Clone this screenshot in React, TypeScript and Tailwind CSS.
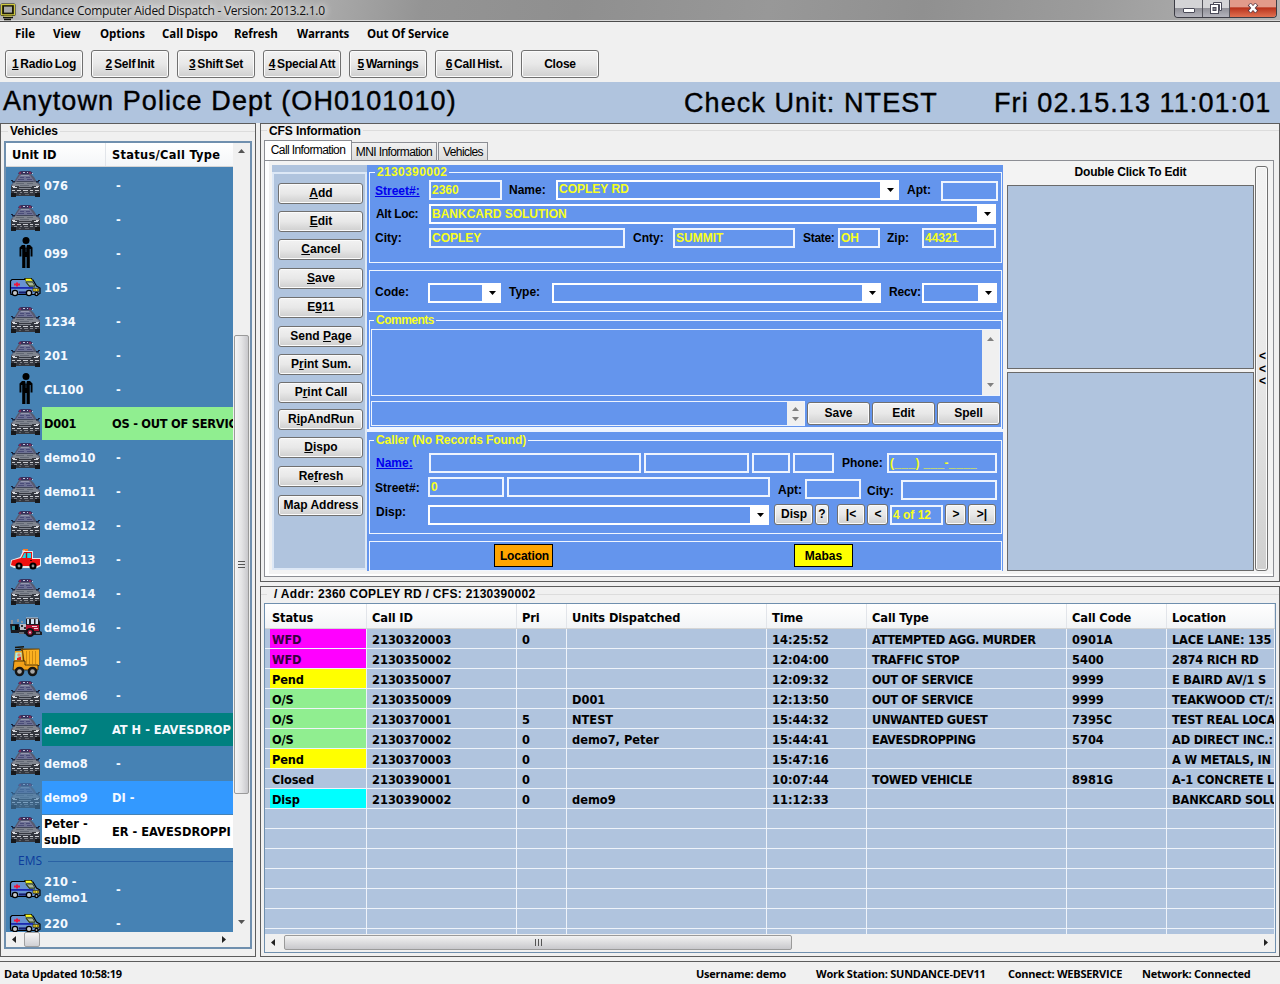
import React from "react";

const FACE = "font-['Liberation_Sans',sans-serif] font-bold whitespace-pre";
const UI = `${FACE} text-[12px] leading-[14px]`;
const LIST = "font-['DejaVu_Sans_Condensed','DejaVu_Sans',sans-serif] font-bold [font-stretch:condensed] text-[12.7px] whitespace-pre";
const SEGOE = "font-['Open_Sans',sans-serif] font-bold leading-[16px] whitespace-pre";
const BTN =
  "flex items-center justify-center shrink-0 rounded-[3px] border border-[#707070] shadow-[inset_0_0_0_1px_#fbfbfb] bg-linear-to-b from-[#f2f2f2] from-0% via-[#e8e8e8] via-50% to-[#cfcfcf] text-black";
const FIELD = "shrink-0 border-2 border-[#eef4fe] bg-[#6495ed] pl-px text-[#f8ff20] flex items-center overflow-hidden";

/* ---------- small glyphs ---------- */

function Tri({ dir, color = "#222" }: { dir: "up" | "down" | "left" | "right"; color?: string }) {
  const d = {
    up: "M0 5 L3.5 1 L7 5Z",
    down: "M0 1 L7 1 L3.5 5Z",
    left: "M5 0 L1 3.5 L5 7Z",
    right: "M1 0 L5 3.5 L1 7Z",
  }[dir];
  return (
    <svg width="7" height="7" viewBox="0 0 7 7" className="block shrink-0">
      <path d={d} fill={color} />
    </svg>
  );
}

function PoliceCar({ faded = false }: { faded?: boolean }) {
  return (
    <svg width="31" height="26" viewBox="0 0 31 26" className={faded ? "-mt-[3px] opacity-40" : "-mt-[3px]"}>
      <path d="M9 1 L11 0 H20 L22 1 L23 3 L8 3Z" fill="#37305c" />
      <path d="M9 1h2v2h-2zM19 1h2v2h-2z" fill="#7c2c58" />
      <path d="M13 1h2v1h-2zM17 1h1v1h-1zM22 2h1v1h-1z" fill="#c4c8dc" />
      <path d="M9 3 H21 L24 6 L27 11 L30 13 V25 H1 V14 L4 11 L7 6Z" fill="#565a70" />
      <path d="M10 4 H20 L24 10 H6Z" fill="#6e7294" />
      <path d="M11 4h8v1h-8z" fill="#9498b0" />
      <path d="M10 6h4v1h-4zM16 6h4v1h-4zM8 8h6v1h-6zM17 8h5v1h-5z" fill="#4a4c78" />
      <path d="M4 11 H26 L30 15 H2Z" fill="#80858f" />
      <path d="M7 10h16v1h-16z" fill="#41465a" />
      <path d="M6 12h8v1h-8zM17 12h6v1h-6zM10 14h9v1h-9z" fill="#626874" />
      <path d="M1 9h2v1h-2zM2 10h3v1.5h-3zM28 9h2v1h-2zM26 10h3v1.5h-3z" fill="#18233c" />
      <path d="M1 15h29v10h-29z" fill="#34373f" />
      <path d="M2 15h3v1h-3zM3 16h4v1h-4zM24 16h4v1h-4zM26 15h3v1h-3z" fill="#d7d9de" />
      <path d="M9 15h13v1h-13zM9 17h12v1h-12z" fill="#81858e" />
      <path d="M2 19h3v1h-3zM7 19h4v1h-4zM13 19h5v1h-5zM20 19h3v1h-3zM25 19h4v1h-4z" fill="#c9cbd0" />
      <path d="M4 21h3v1h-3zM10 21h2v1h-2zM14 21h4v1h-4zM20 21h3v1h-3zM25 21h2v1h-2z" fill="#85888f" />
      <path d="M1 22h5v4h-5zM25 22h5v4h-5z" fill="#17181b" />
      <path d="M9 23h2v1h-2zM15 23h4v1h-4z" fill="#5e6066" />
    </svg>
  );
}

function Person() {
  return (
    <svg width="14" height="32" viewBox="0 0 14 32">
      <circle cx="7" cy="3.6" r="3.5" fill="#000" />
      <path d="M3 8 H11 L13.5 10.5 V19.5 H11.6 V12 H10.8 V31 H7.6 V20 H6.4 V31 H3.2 V12 H2.4 V19.5 H0.5 V10.5Z" fill="#000" />
      <path d="M6 8h2l-1 4z" fill="#4682b4" />
      <path d="M7 12v3" stroke="#27567c" strokeWidth="0.6" />
    </svg>
  );
}

function Ambulance() {
  return (
    <svg width="32" height="20" viewBox="0 0 32 20" className="-ml-px -mt-px">
      <path d="M1.5 15.5 V4 L3 2.5 H16 V1.5 H22.5 V3 H24 L27.5 9 L31 11 V16.5 L29 17.5 H2Z" fill="#6892d0" stroke="#000" strokeWidth="1.2" />
      <path d="M16.5 1.5 H22 L24 4.2 H16.5Z" fill="#ffff20" stroke="#3a3a00" strokeWidth="0.5" />
      <path d="M17 5 H23.5 L26 9 H20Z" fill="#a4b49c" stroke="#26300c" strokeWidth="0.8" />
      <path d="M17 5 L21 10 H26" stroke="#3a4c18" strokeWidth="1.2" fill="none" />
      <path d="M5 6.5h6v2h-6zM7 5.5h2v4h-2z" fill="#f0143c" />
      <path d="M2 10h22v1.8h-22z" fill="#1a28b0" />
      <path d="M10 14.4h7v2.2h-7z" fill="#141c70" />
      <path d="M24 11.4h6v3h-6z" fill="#f0e030" stroke="#000" strokeWidth="0.6" />
      <path d="M25.5 12.4h1.2v1.2h-1.2zM28 12.4h1.2v1.2h-1.2z" fill="#402000" />
      <circle cx="6" cy="16" r="3.3" fill="#000" />
      <circle cx="6" cy="16" r="2" fill="#c4c8cc" />
      <circle cx="20" cy="16" r="3.3" fill="#000" />
      <circle cx="20" cy="16" r="2" fill="#c4c8cc" />
      <circle cx="27.5" cy="17" r="2.2" fill="#000" />
      <circle cx="27.5" cy="17" r="0.9" fill="#b0b0b0" />
    </svg>
  );
}

function RedCar() {
  return (
    <svg width="31" height="22" viewBox="0 0 31 22">
      <path d="M0 18 L1 12 L10 9 L13 3 H23 V10 H31 V18 L27 20 H4Z" fill="#e8e8e8" />
      <path d="M1 17 L2 12.5 L11 10 L14 4 H22 V11 H30 V17 L27 18 H4Z" fill="#ee1010" />
      <path d="M12 10 L14.5 5 H21 V10Z" fill="#18d8e8" />
      <path d="M16.5 4 V10" stroke="#b01010" strokeWidth="1.4" />
      <path d="M13 1h5v2h-5z" fill="#ff7a20" />
      <path d="M12 2.5h3v1h-3z" fill="#f0f0f0" />
      <path d="M20 12h2v1h-2z" fill="#400" />
      <circle cx="9" cy="18" r="3.6" fill="#000" />
      <circle cx="9" cy="18" r="1.4" fill="#909090" />
      <circle cx="23" cy="18" r="3.6" fill="#000" />
      <circle cx="23" cy="18" r="1.4" fill="#909090" />
    </svg>
  );
}

function FireTruck() {
  return (
    <svg width="32" height="22" viewBox="0 0 32 22">
      <path d="M0 8h9v3h7V2h12l2 4v9l2 1v3H18l-6-2H1Z" fill="#1a1a20" />
      <path d="M16 1.5h12v1h-12z" fill="#c8c8d0" />
      <path d="M17 3h2v5h-2zM21 3h3v5h-3zM25.5 3h2.5v5h-2.5z" fill="#cfe0f0" />
      <path d="M16 9h13v6h-13z" fill="#b01230" />
      <path d="M22 10h5v1h-5zM24 12h4v1h-4z" fill="#f0d0d8" />
      <path d="M10 8h6v6h-6z" fill="#b8bcc6" />
      <path d="M11 9h2v2h-2zM14 11h2v2h-2z" fill="#333" />
      <path d="M2 10h3v4h-3z" fill="#2c8a98" />
      <path d="M1 4h2v4h-2zM7 3h2v3h-2zM11 5h2v2h-2z" fill="#8a929c" />
      <path d="M5 9h3v5h-3z" fill="#000" />
      <circle cx="20" cy="16.5" r="4.5" fill="#101014" />
      <circle cx="20" cy="16.5" r="2.4" fill="#a01a3c" />
      <circle cx="20" cy="16.5" r="1" fill="#d8d8e0" />
      <path d="M9 16h5v2h-5zM26 16h4v2h-4z" fill="#686c74" />
    </svg>
  );
}

function DumpTruck() {
  return (
    <svg width="28" height="31" viewBox="0 0 28 31">
      <path d="M3 1.5 L12 0.8 M3 4 L11 3" stroke="#1a1408" strokeWidth="1.6" />
      <path d="M9 2.5 H27.5 V20 H12 L9 14Z" fill="#6a4408" />
      <path d="M11 4 L27 3.5 V19 H13Z" fill="#fcb020" />
      <path d="M14.5 5v13M17.5 5v13M20.5 5v13M23.5 5v13" stroke="#c88410" strokeWidth="0.9" />
      <path d="M3 5 L10 5 L11 15 H2Z" fill="#f0a018" />
      <path d="M3.5 6.5 H9.5 V14 H3Z" fill="#a8f0e8" />
      <circle cx="7" cy="9" r="1.8" fill="#e89070" />
      <path d="M5 12 L9 10.5 V14 H5Z" fill="#e02020" />
      <path d="M2 15 H13 V19 H26 V24 H1Z" fill="#f0a018" stroke="#2a1c04" strokeWidth="0.8" />
      <circle cx="7.5" cy="25.5" r="4.8" fill="#151515" />
      <circle cx="7.5" cy="25.5" r="2.3" fill="#a8a8a8" />
      <circle cx="20.5" cy="25.5" r="4.8" fill="#151515" />
      <circle cx="20.5" cy="25.5" r="2.3" fill="#a8a8a8" />
    </svg>
  );
}

type Kind = "police" | "faded" | "person" | "ambulance" | "red" | "fire" | "dump";

function Icon({ kind }: { kind: Kind }) {
  if (kind === "person") return <Person />;
  if (kind === "ambulance") return <Ambulance />;
  if (kind === "red") return <RedCar />;
  if (kind === "fire") return <FireTruck />;
  if (kind === "dump") return <DumpTruck />;
  return <PoliceCar faded={kind === "faded"} />;
}

/* ---------- window chrome ---------- */

function TitleBar() {
  return (
    <header className="flex h-[22px] justify-between border-b border-[#4c4c4c] bg-[linear-gradient(100deg,#b4b4b4_0%,#bdbdbd_18%,#a8a8a8_26%,#949494_33%,#8f8f8f_45%,#989898_60%,#909090_72%,#9c9c9c_85%,#a8a8a8_93%,#b4b4b4_100%)] shadow-[inset_0_-1px_0_#d8d8d8]">
      <div className="flex items-start">
        <svg width="17" height="20" viewBox="0 0 17 20" className="mt-[2px]">
          <rect x="0.5" y="1.5" width="15" height="12.5" rx="1.5" fill="#1c1c08" />
          <rect x="1.6" y="2.6" width="12.8" height="10.2" fill="none" stroke="#d8d040" strokeWidth="1.1" />
          <rect x="4" y="4.6" width="8" height="6" fill="#a9a9a9" />
          <path d="M3 15.5h10M4 17.5h7" stroke="#14140a" strokeWidth="1.5" />
          <path d="M4 14.2h8" stroke="#d8d040" strokeWidth="0.8" />
        </svg>
        <span className="ml-[4px] mt-[2px] whitespace-pre font-['Open_Sans',sans-serif] text-[12px] leading-[17px] tracking-[-0.26px] text-[#111] [text-shadow:0_0_6px_#fff,0_0_8px_#fff]">
          Sundance Computer Aided Dispatch - Version: 2013.2.1.0
        </span>
      </div>
      <div className="mr-[3px] flex h-[18px] w-[103px] overflow-hidden rounded-b-[4px] border border-t-0 border-[#3c3c44]">
        <div className="flex w-[28px] items-center justify-center border-r border-[#55555c] bg-linear-to-b from-[#d4d4d6] from-45% via-[#8f8f96] via-46% to-[#b4b4bc]">
          <div className="mt-[3px] h-[5px] w-[12px] rounded-[1px] border border-[#4a4a58] bg-white" />
        </div>
        <div className="flex w-[27px] items-center justify-center border-r border-[#55555c] bg-linear-to-b from-[#d4d4d6] from-45% via-[#8f8f96] via-46% to-[#b4b4bc]">
          <svg width="12" height="12" viewBox="0 0 12 12" className="-mt-[1px]">
            <path d="M3.5 0.5h8v8h-2v-6h-6z" fill="#fff" stroke="#4a4a58" />
            <rect x="0.5" y="2.5" width="8" height="9" fill="#fff" stroke="#4a4a58" />
            <rect x="3" y="5.5" width="3" height="3" fill="#8a8a92" stroke="#4a4a58" />
          </svg>
        </div>
        <div className="flex flex-1 items-center justify-center bg-linear-to-b from-[#e29a8a] from-40% via-[#b8301a] via-46% to-[#e07050]">
          <svg width="12" height="10" viewBox="0 0 12 10" className="-mt-[1px]">
            <path d="M2.2 1 L9.8 9 M9.8 1 L2.2 9" stroke="#5a3a44" strokeWidth="4" />
            <path d="M2.8 1.4 L9.2 8.6 M9.2 1.4 L2.8 8.6" stroke="#fff" strokeWidth="2.4" />
          </svg>
        </div>
      </div>
    </header>
  );
}

function Menu() {
  return (
    <nav className={`${SEGOE} flex h-[28px] items-start pt-[4px] text-[11.5px] tracking-[-0.05px]`}>
      <span className="ml-[15px] w-[38px]">File</span>
      <span className="w-[47px]">View</span>
      <span className="w-[62px]">Options</span>
      <span className="w-[72px]">Call Dispo</span>
      <span className="w-[63px]">Refresh</span>
      <span className="w-[70px] tracking-[-0.2px]">Warrants</span>
      <span>Out Of Service</span>
    </nav>
  );
}

const TOOLS: [string, string][] = [
  ["1", " Radio Log"],
  ["2", " Self Init"],
  ["3", " Shift Set"],
  ["4", " Special Att"],
  ["5", " Warnings"],
  ["6", " Call Hist."],
  ["", "Close"],
];

function Toolbar() {
  return (
    <div className="flex h-[32px] gap-[8px] pl-[5px]">
      {TOOLS.map(([k, t]) => (
        <button key={t} className={`${BTN} ${UI} h-[28px] w-[78px] tracking-[-0.2px] [word-spacing:-1.2px]`}>
          <span>
            <u>{k}</u>
            {t}
          </span>
        </button>
      ))}
    </div>
  );
}

/* ---------- vehicles ---------- */

const VEHICLES: [Kind, string, string, string][] = [
  ["police", "076", "-", ""],
  ["police", "080", "-", ""],
  ["person", "099", "-", ""],
  ["ambulance", "105", "-", ""],
  ["police", "1234", "-", ""],
  ["police", "201", "-", ""],
  ["person", "CL100", "-", ""],
  ["police", "D001", "OS - OUT OF SERVIC", "bg-[#90ee90] text-black tracking-[-0.25px]"],
  ["police", "demo10", "-", ""],
  ["police", "demo11", "-", ""],
  ["police", "demo12", "-", ""],
  ["red", "demo13", "-", ""],
  ["police", "demo14", "-", ""],
  ["fire", "demo16", "-", ""],
  ["dump", "demo5", "-", ""],
  ["police", "demo6", "-", ""],
  ["police", "demo7", "AT H - EAVESDROP", "bg-[#008080]"],
  ["police", "demo8", "-", ""],
  ["faded", "demo9", "DI -", "bg-[#3399ff]"],
  ["police", "Peter -\nsubID", "ER - EAVESDROPPI", "bg-white text-black"],
];

function VehicleRow({ v }: { v: [Kind, string, string, string] }) {
  const [kind, id, status, tone] = v;
  return (
    <div className="flex h-[34px] shrink-0 items-start text-[#f4f9ff]">
      <div className="flex h-[32px] w-[36px] shrink-0 items-center justify-center pl-[3px]">
        <Icon kind={kind} />
      </div>
      <div className={`flex h-[33px] w-[191px] shrink-0 items-center overflow-hidden pl-[2px] leading-[16px] ${tone}`}>
        <span className="w-[68px] shrink-0">{id}</span>
        <span className={status === "-" ? "pl-[4px]" : ""}>{status}</span>
      </div>
    </div>
  );
}

function Vehicles() {
  return (
    <section className="flex h-[834px] w-[256px] shrink-0 flex-col border border-[#5c5c5c] bg-[#f0f0f0]">
      <div className="flex h-[14px] items-center">
        <span className="h-px w-[7px] bg-[#dcdcdc]" />
        <span className={`${UI} px-[2px]`}>Vehicles</span>
        <span className="h-px flex-1 bg-[#dcdcdc]" />
      </div>
      <div className="ml-[3px] mt-[3px] flex h-[808px] w-[248px] flex-col border-2 border-[#6f8fae] bg-[#f0f0f0]">
        <div className="flex h-[789px]">
          <div className={`${LIST} flex w-[227px] flex-col overflow-hidden bg-[#4682b4]`}>
            <div className="flex h-[24px] shrink-0 items-center border-b border-[#d5d5d5] bg-linear-to-b from-white to-[#f4f6f8]">
              <span className="h-full w-[100px] border-r border-[#e2e5ea] pl-[6px] leading-[24px]">Unit ID</span>
              <span className="pl-[6px] tracking-[0.3px]">Status/Call Type</span>
            </div>
            <div className="h-[2px] w-[12px] shrink-0" />
            {VEHICLES.map((v) => (
              <VehicleRow key={v[1]} v={v} />
            ))}
            <div className="flex h-[24px] shrink-0 items-center pl-[12px]">
              <span className="font-['Open_Sans',sans-serif] text-[12px] font-normal text-[#0c3c9c] [font-stretch:normal]">EMS</span>
              <span className="ml-[6px] h-px flex-1 bg-[#2a62a4]" />
            </div>
            <VehicleRow v={["ambulance", "210 -\ndemo1", "-", ""]} />
            <VehicleRow v={["ambulance", "220", "-", ""]} />
          </div>
          <div className="flex w-[17px] flex-col items-center bg-[#f0f0f0] pt-[5px]">
            <Tri dir="up" color="#555" />
            <div className="mt-[180px] flex h-[459px] w-[15px] shrink-0 items-center justify-center rounded-[2px] border border-[#9a9a9a] bg-linear-to-r from-[#f6f6f6] via-[#e4e4e6] to-[#c8c8cc]">
              <div className="flex flex-col gap-[2px]">
                <span className="h-px w-[7px] bg-[#555]" />
                <span className="h-px w-[7px] bg-[#555]" />
                <span className="h-px w-[7px] bg-[#555]" />
              </div>
            </div>
            <div className="mt-[125px]">
              <Tri dir="down" color="#555" />
            </div>
          </div>
        </div>
        <div className="flex h-[15px] items-center">
          <span className="ml-[5px]">
            <Tri dir="left" />
          </span>
          <span className="ml-[6px] h-[15px] w-[16px] rounded-[2px] border border-[#a0a0a0] bg-linear-to-b from-[#f6f6f6] to-[#d0d0d4]" />
          <span className="ml-[181px]">
            <Tri dir="right" />
          </span>
        </div>
      </div>
    </section>
  );
}

/* ---------- call form ---------- */

function Combo({ className, children }: { className: string; children?: React.ReactNode }) {
  return (
    <div className={`flex h-[20px] shrink-0 bg-white p-[2px] ${className}`}>
      <div className="flex flex-1 items-center overflow-hidden bg-[#6495ed] pl-px text-[#f8ff20]">{children}</div>
      <div className="flex w-[17px] items-center justify-center pl-[3px] pt-px">
        <Tri dir="down" color="#000" />
      </div>
    </div>
  );
}

const ACTIONS: [string, string, string, string][] = [
  ["", "A", "dd", "mt-0"],
  ["", "E", "dit", "mt-[7px]"],
  ["", "C", "ancel", "mt-[7px]"],
  ["", "S", "ave", "mt-[8px]"],
  ["E", "9", "11", "mt-[8px]"],
  ["Send ", "P", "age", "mt-[8px]"],
  ["P", "r", "int Sum.", "mt-[7px]"],
  ["P", "r", "int Call", "mt-[7px]"],
  ["R", "i", "pAndRun", "mt-[6px]"],
  ["", "D", "ispo", "mt-[7px]"],
  ["Re", "f", "resh", "mt-[8px]"],
  ["Map Address", "", "", "mt-[8px]"],
];

function Actions() {
  return (
    <div className="ml-[7px] mt-[4px] h-[405px] w-[95px] shrink-0 bg-[#b0c4de] pt-[7px]">
      <div className="h-[398px] border-2 border-[#dde8f6] pl-[4px] pt-[9px]">
        {ACTIONS.map(([a, u, b, m]) => (
          <button key={a + u + b} className={`${BTN} ${UI} ${m} h-[21px] w-[85px] pb-px pl-px`}>
            <span>
              {a}
              <u>{u}</u>
              {b}
            </span>
          </button>
        ))}
      </div>
    </div>
  );
}

const GROUP = "ml-[2px] w-[633px] border border-[#f0f6ff]";

function Form() {
  return (
    <div className={`${UI} mt-[4px] h-[406px] w-[636px] shrink-0 bg-[#6495ed]`}>
      <fieldset className={`${GROUP} h-[98px]`}>
        <legend className="ml-[5px] px-[2px] leading-[14px] tracking-[0.35px] text-[#f8ff20]">2130390002</legend>
        <div className="flex items-start">
          <span className="ml-[5px] mt-[5px] w-[54px] text-[#0000ee] underline">Street#:</span>
          <div className={`${FIELD} mt-[1px] h-[20px] w-[73px]`}>2360</div>
          <span className="ml-[7px] mt-[4px] w-[47px]">Name:</span>
          <Combo className="mt-[1px] w-[343px]">
            <span className="pb-[2px]">COPLEY RD</span>
          </Combo>
          <span className="ml-[8px] mt-[4px] w-[34px]">Apt:</span>
          <div className={`${FIELD} mt-[2px] h-[20px] w-[57px]`} />
        </div>
        <div className="mt-[3px] flex items-start">
          <span className="ml-[6px] mt-[3px] w-[53px] tracking-[-0.3px]">Alt Loc:</span>
          <Combo className="w-[567px]">BANKCARD SOLUTION</Combo>
        </div>
        <div className="mt-[4px] flex items-center">
          <span className="ml-[5px] w-[54px]">City:</span>
          <div className={`${FIELD} h-[20px] w-[196px]`}>COPLEY</div>
          <span className="ml-[8px] w-[40px]">Cnty:</span>
          <div className={`${FIELD} h-[20px] w-[122px]`}>SUMMIT</div>
          <span className="ml-[8px] w-[35px] tracking-[-0.3px]">State:</span>
          <div className={`${FIELD} h-[20px] w-[42px]`}>OH</div>
          <span className="ml-[7px] w-[35px]">Zip:</span>
          <div className={`${FIELD} h-[20px] w-[74px]`}>44321</div>
        </div>
      </fieldset>
      <div className={`${GROUP} mt-[7px] flex h-[42px] items-center pt-[4px]`}>
        <span className="-mt-[2px] ml-[5px] w-[53px]">Code:</span>
        <Combo className="w-[73px]" />
        <span className="-mt-[2px] ml-[8px] w-[43px]">Type:</span>
        <Combo className="w-[329px]" />
        <span className="-mt-[2px] ml-[8px] w-[33px] tracking-[-0.2px]">Recv:</span>
        <Combo className="w-[75px]" />
      </div>
      <fieldset className={`${GROUP} mt-px h-[116px] border-b-2`}>
        <legend className="ml-[4px] px-[2px] leading-[14px] tracking-[-0.5px] text-[#f8ff20]">Comments</legend>
        <div className="ml-px mt-[2px] flex h-[67px] w-[629px] border border-[#eef4fe]">
          <div className="flex-1" />
          <div className="flex w-[17px] flex-col items-center justify-between bg-[#f0f0f0] py-[6px]">
            <Tri dir="up" color="#808080" />
            <Tri dir="down" color="#808080" />
          </div>
        </div>
        <div className="ml-px mt-[5px] flex h-[25px]">
          <div className="flex w-[434px] border border-[#eef4fe]">
            <div className="flex-1" />
            <div className="flex w-[17px] flex-col items-center justify-between bg-[#f0f0f0] pb-[2px] pt-[4px]">
              <Tri dir="up" color="#808080" />
              <Tri dir="down" color="#808080" />
            </div>
          </div>
          <button className={`${BTN} ${UI} ml-[2px] mt-px h-[23px] w-[63px] pb-px`}>Save</button>
          <button className={`${BTN} ${UI} ml-[2px] mt-px h-[23px] w-[63px] pb-px`}>Edit</button>
          <button className={`${BTN} ${UI} ml-[2px] mt-px h-[23px] w-[63px] pb-px`}>Spell</button>
        </div>
      </fieldset>
      <div className="h-[3px] bg-[#eef4fe]" />
      <fieldset className={`${GROUP} mt-px h-[101px]`}>
        <legend className="ml-[4px] px-[2px] leading-[14px] tracking-[-0.07px] text-[#f8ff20]">Caller (No Records Found)</legend>
        <div className="mt-[6px] flex items-center">
          <span className="ml-[6px] w-[53px] text-[#0000ee] underline">Name:</span>
          <div className={`${FIELD} h-[20px] w-[212px]`} />
          <div className={`${FIELD} ml-[3px] h-[20px] w-[105px]`} />
          <div className={`${FIELD} ml-[3px] h-[20px] w-[38px]`} />
          <div className={`${FIELD} ml-[3px] h-[20px] w-[41px]`} />
          <span className="ml-[8px] w-[45px]">Phone:</span>
          <div className={`${FIELD} h-[20px] w-[110px] tracking-[0.35px]`}>(___) ___-____</div>
        </div>
        <div className="mt-[4px] flex items-start">
          <span className="ml-[5px] mt-[4px] w-[53px]">Street#:</span>
          <div className={`${FIELD} h-[20px] w-[76px]`}>0</div>
          <div className={`${FIELD} ml-[3px] h-[20px] w-[263px]`} />
          <span className="ml-[8px] mt-[6px] w-[27px]">Apt:</span>
          <div className={`${FIELD} mt-[2px] h-[20px] w-[56px]`} />
          <span className="ml-[6px] mt-[7px] w-[34px]">City:</span>
          <div className={`${FIELD} mt-[3px] h-[20px] w-[96px]`} />
        </div>
        <div className="mt-[3px] flex items-start">
          <span className="ml-[6px] mt-[2px] w-[52px]">Disp:</span>
          <Combo className="mt-[2px] w-[341px]" />
          <button className={`${BTN} ${UI} ml-[5px] mt-px h-[21px] w-[39px] pb-px pl-px`}>Disp</button>
          <button className={`${BTN} ${UI} ml-[2px] mt-px h-[21px] w-[14px] pb-px`}>?</button>
          <button className={`${BTN} ${UI} ml-[8px] mt-px h-[21px] w-[28px] pb-px`}>|&lt;</button>
          <button className={`${BTN} ${UI} ml-[2px] mt-px h-[21px] w-[21px] pb-px pl-px`}>&lt;</button>
          <div className={`${FIELD} ml-[2px] mt-[2px] h-[20px] w-[53px]`}>4 of 12</div>
          <button className={`${BTN} ${UI} ml-[2px] mt-px h-[21px] w-[21px] pb-px pl-px`}>&gt;</button>
          <button className={`${BTN} ${UI} ml-[2px] mt-px h-[21px] w-[28px] pb-px`}>&gt;|</button>
        </div>
      </fieldset>
      <div className={`${GROUP} mt-[7px] flex h-[30px] items-start pt-[2px]`}>
        <div className="ml-[124px] flex h-[23px] w-[59px] items-center justify-center border border-black bg-[#ffa500] pl-[2px] tracking-[-0.1px] text-black">
          Location
        </div>
        <div className="ml-[241px] flex h-[23px] w-[59px] items-center justify-center border border-black bg-[#ffff00] text-black">
          Mabas
        </div>
      </div>
    </div>
  );
}

function CallInformation() {
  return (
    <section className="flex h-[459px] flex-col border border-[#5c5c5c] bg-[#f0f0f0]">
      <div className="flex h-[13px] items-center">
        <span className="h-px w-[6px] bg-[#dcdcdc]" />
        <span className={`${UI} px-[2px] tracking-[-0.1px]`}>CFS Information</span>
        <span className="h-px flex-1 bg-[#dcdcdc]" />
      </div>
      <div className="ml-[3px] mt-[2px] flex h-[21px] items-end whitespace-pre font-['Liberation_Sans',sans-serif] text-[12px] leading-[14px] tracking-[-0.6px]">
        <div className="-mb-px flex h-[21px] w-[88px] items-center justify-center border border-b-0 border-[#8c8e94] bg-white pb-[2px]">
          Call Information
        </div>
        <div className="flex h-[18px] w-[85px] items-center justify-center border border-b-0 border-l-0 border-[#8c8e94] bg-linear-to-b from-[#f2f2f2] to-[#dcdcdc]">
          MNI Information
        </div>
        <div className="ml-[1px] flex h-[18px] w-[50px] items-center justify-center border border-b-0 border-[#8c8e94] bg-linear-to-b from-[#f2f2f2] to-[#dcdcdc]">
          Vehicles
        </div>
      </div>
      <div className="ml-[3px] flex h-[417px] w-[1010px] border border-[#8c8e94] bg-[#f3f3f3] shadow-[inset_4px_0_0_#fff,inset_0_-2px_0_#fff]">
        <Actions />
        <Form />
        <div className="ml-[4px] mt-[4px] w-[247px] shrink-0">
          <div className={`${UI} h-[20px] text-center tracking-[-0.2px]`}>Double Click To Edit</div>
          <div className="h-[184px] border border-[#6a6a6a] bg-[#b0c4de]" />
          <div className="mt-[3px] h-[199px] border border-[#6a6a6a] bg-[#b0c4de]" />
        </div>
        <button
          className={`${BTN} ${FACE} ml-px mt-[5px] h-[405px] w-[13px] flex-col pl-[2px] pt-px text-[12px] leading-[12.5px]`}
        >
          <span>&lt;</span>
          <span>&lt;</span>
          <span>&lt;</span>
        </button>
      </div>
    </section>
  );
}

/* ---------- calls grid ---------- */

const COLS = [
  "w-[102px] pl-[7px]",
  "w-[150px] pl-[5px]",
  "w-[50px] pl-[5px]",
  "w-[200px] pl-[5px]",
  "w-[100px] pl-[5px]",
  "w-[200px] pl-[5px]",
  "w-[100px] pl-[5px]",
  "w-[108px] pl-[5px]",
];
const HEAD = ["Status", "Call ID", "Pri", "Units Dispatched", "Time", "Call Type", "Call Code", "Location"];
const ROWS: string[][] = [
  ["WFD", "2130320003", "0", "", "14:25:52", "ATTEMPTED AGG. MURDER", "0901A", "LACE LANE: 135"],
  ["WFD", "2130350002", "", "", "12:04:00", "TRAFFIC STOP", "5400", "2874 RICH RD"],
  ["Pend", "2130350007", "", "", "12:09:32", "OUT OF SERVICE", "9999", "E BAIRD AV/1 S"],
  ["O/S", "2130350009", "", "D001", "12:13:50", "OUT OF SERVICE", "9999", "TEAKWOOD CT/:"],
  ["O/S", "2130370001", "5", "NTEST", "15:44:32", "UNWANTED GUEST", "7395C", "TEST REAL LOCA"],
  ["O/S", "2130370002", "0", "demo7, Peter", "15:44:41", "EAVESDROPPING", "5704", "AD DIRECT INC.:"],
  ["Pend", "2130370003", "0", "", "15:47:16", "", "", "A W METALS, IN"],
  ["Closed", "2130390001", "0", "", "10:07:44", "TOWED VEHICLE", "8981G", "A-1 CONCRETE L"],
  ["Disp", "2130390002", "0", "demo9", "11:12:33", "", "", "BANKCARD SOLU"],
  ...Array.from({ length: 7 }, () => ["", "", "", "", "", "", "", ""]),
];
const TONE: Record<string, string> = {
  WFD: "bg-[#ff00ff] text-[#38003f]",
  Pend: "bg-[#ffff00]",
  "O/S": "bg-[#90ee90]",
  Disp: "bg-[#00ffff]",
};

function Calls() {
  return (
    <section className="mt-[4px] flex h-[371px] flex-col border border-[#5c5c5c] bg-[#f0f0f0]">
      <div className="flex h-[14px] items-center">
        <span className="h-px w-[6px] bg-[#dcdcdc]" />
        <span className={`${UI} px-[2px] pl-[7px] tracking-[0.3px]`}>/ Addr: 2360 COPLEY RD / CFS: 2130390002</span>
        <span className="h-px flex-1 bg-[#dcdcdc]" />
      </div>
      <div className={`${LIST} ml-[3px] mt-[2px] flex h-[350px] w-[1012px] flex-col border border-[#6f8fae] bg-[#b0c4de]`}>
        <div className="flex h-[25px] shrink-0 overflow-hidden border-b border-[#d5d5d5] bg-linear-to-b from-white to-[#f2f4f6]">
          {HEAD.map((h, i) => (
            <div key={h} className={`${COLS[i]} shrink-0 border-r border-[#e2e5ea] leading-[27px] tracking-[-0.1px]`}>
              {h}
            </div>
          ))}
        </div>
        <div className="h-[305px] overflow-hidden">
          {ROWS.map((r, n) => (
            <div key={n} className="flex h-[20px] overflow-hidden">
              {r.map((c, i) =>
                i === 0 ? (
                  <div key={i} className="flex w-[102px] shrink-0 border-b border-r border-[#eef3fa] pl-[5px]">
                    <div className={`flex-1 pl-[2px] leading-[21px] tracking-[-0.15px] ${TONE[c] ?? ""}`}>{c}</div>
                  </div>
                ) : (
                  <div
                    key={i}
                    className={`${COLS[i]} shrink-0 overflow-hidden border-b border-r border-[#eef3fa] leading-[21px] ${
                      i === 5 ? "tracking-[-0.38px]" : i === 7 ? "tracking-[-0.2px]" : ""
                    }`}
                  >
                    <span>{c}</span>
                  </div>
                )
              )}
            </div>
          ))}
        </div>
        <div className="flex h-[18px] items-center justify-between bg-[#f0f0f0] px-[5px] pb-px">
          <Tri dir="left" />
          <div className="ml-[7px] mr-auto flex h-[15px] w-[508px] items-center justify-center gap-[2px] rounded-[2px] border border-[#9a9a9a] bg-linear-to-b from-[#f2f2f2] to-[#c8c8cc]">
            <span className="h-[7px] w-px bg-[#555]" />
            <span className="h-[7px] w-px bg-[#555]" />
            <span className="h-[7px] w-px bg-[#555]" />
          </div>
          <Tri dir="right" />
        </div>
      </div>
    </section>
  );
}

export default function App() {
  return (
    <div className="flex h-[984px] w-[1280px] flex-col overflow-hidden bg-[#f0f0f0] text-black">
      <TitleBar />
      <Menu />
      <Toolbar />
      <div className="flex h-[41px] items-start whitespace-pre bg-[#b0c4de] font-['Liberation_Sans',sans-serif] text-[27px] leading-[32px] tracking-[1.08px] text-black [-webkit-text-stroke:0.4px_black]">
        <span className="ml-[3px] mt-[3px] w-[681px]">Anytown Police Dept (OH0101010)</span>
        <span className="mt-[5px] w-[310px]">Check Unit: NTEST</span>
        <span className="mt-[5px]">Fri 02.15.13 11:01:01</span>
      </div>
      <main className="flex h-[834px]">
        <Vehicles />
        <div className="ml-[4px] flex w-[1020px] flex-col">
          <CallInformation />
          <Calls />
        </div>
      </main>
      <footer className={`${SEGOE} mt-[4px] flex flex-1 items-center border-t border-[#5c5c5c] pt-[2px] text-[11px] tracking-[-0.25px]`}>
        <span className="ml-[4px] w-[692px]">Data Updated 10:58:19</span>
        <span className="w-[120px]">Username: demo</span>
        <span className="w-[192px]">Work Station: SUNDANCE-DEV11</span>
        <span className="w-[134px]">Connect: WEBSERVICE</span>
        <span>Network: Connected</span>
      </footer>
    </div>
  );
}
